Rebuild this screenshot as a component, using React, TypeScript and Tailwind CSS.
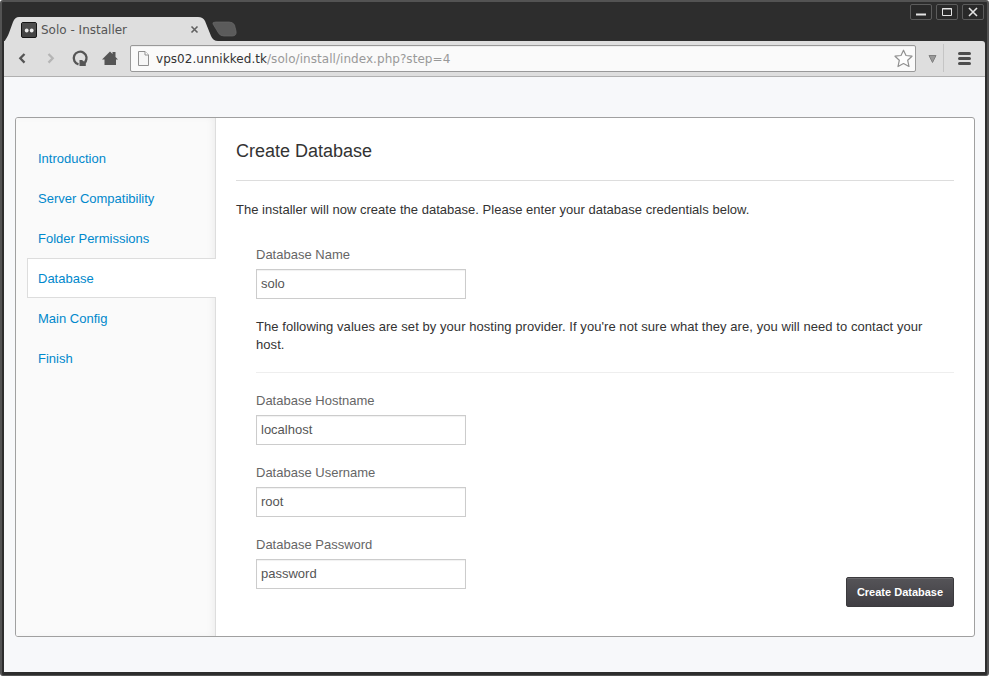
import React from "react";

const steps = ["Introduction", "Server Compatibility", "Folder Permissions", "Database", "Main Config", "Finish"];

function Field({ label, value }: { label: string; value: string }) {
  return (
    <label className="block">
      <span className="block h-[18px] leading-[18px] text-[#666]">{label}</span>
      <input
        defaultValue={value}
        className="mt-[5px] block h-[30px] w-[210px] border border-[#ccc] bg-white px-1 pb-[2px] text-[13px] text-[#555] shadow-[inset_0_1px_1px_rgba(0,0,0,0.06)] outline-none"
      />
    </label>
  );
}

function WindowButton({ children }: { children: React.ReactNode }) {
  return (
    <div className="flex h-4 w-[22px] items-center justify-center rounded-[2px] border border-[#5c5c5c] bg-[#292929]">
      <svg width="12" height="12" viewBox="0 0 12 12" fill="none" stroke="#e4e4e4">
        {children}
      </svg>
    </div>
  );
}

function TabStrip() {
  return (
    <div className="flex h-[39px] justify-between">
      <div className="relative h-[39px] w-[240px]">
        <svg className="absolute left-0 top-[15px]" width="236" height="25" viewBox="0 0 236 25">
          <path d="M0 25C2 22 4 19 5 16L9 5Q11 0 15 0H194Q199 0 201 4L207 19Q209 24 214 24V25Z" fill="#dedede" />
          <path d="M212 5H225Q229 5 230.500 8L232 14Q233 19 228 19H220Q216 19 214.500 16L209 7Q208 5 212 5Z" fill="#5b5b5b" stroke="#686868" strokeWidth="0.700" />
        </svg>
        <div className="relative flex h-full items-center pl-[17px] pt-[16px]">
          <svg width="16" height="16" viewBox="0 0 16 16">
            <rect x="0.500" y="0.500" width="15" height="15" rx="1.500" fill="#444" stroke="#161616" />
            <rect x="1" y="1" width="14" height="7" fill="#4d4d4d" />
            <circle cx="5.700" cy="8.500" r="1.900" fill="#ededed" />
            <circle cx="10.700" cy="8.500" r="1.900" fill="#ededed" />
          </svg>
          <span className="ml-1 w-[149px] whitespace-nowrap font-['DejaVu_Sans',sans-serif] text-[12px] leading-4 text-[#555]">Solo - Installer</span>
          <svg width="9" height="9" viewBox="0 0 9 9" stroke="#616161" strokeWidth="1.600">
            <path d="M1.500 1.500L7.500 7.500M7.500 1.500L1.500 7.500" />
          </svg>
        </div>
      </div>
      <div className="flex gap-1 pr-px pt-[2px]">
        <WindowButton><path d="M1 8.500H11" strokeWidth="2" /></WindowButton>
        <WindowButton><path d="M1.500 2.500H10.500V9.500H1.500Z M1 3H11" /></WindowButton>
        <WindowButton><path d="M2 2L10 10M10 2L2 10" strokeWidth="1.600" /></WindowButton>
      </div>
    </div>
  );
}

function Toolbar() {
  return (
    <div className="flex h-9 shrink-0 rounded-tr-[3px] border-b border-[#b0b0b0] bg-[#dedede]">
      <svg className="shrink-0" width="126" height="35" viewBox="4 41 126 35">
        <path d="M24.500 54L20.300 58.300L24.500 62.600" fill="none" stroke="#555" strokeWidth="2.300" />
        <path d="M48.500 54L52.700 58.300L48.500 62.600" fill="none" stroke="#b5b5b5" strokeWidth="2.300" />
        <path d="M78.500 64.300A6.400 6.400 0 1 1 85 62.300" fill="none" stroke="#555" strokeWidth="2.300" />
        <path d="M79.500 60H82L84 61.500L87 61L85.800 63.500V66H79.500Z" fill="#555" />
        <path d="M102 59.500L110 51.500L112.500 54V52H115.500V57L118 59.500H116V65H104.500V59.500Z" fill="#555" />
      </svg>
      <div className="mt-[4px] flex h-[27px] w-[786px] shrink-0 items-center rounded-[2px] border border-[#999] bg-[#fafafa] pl-[7px] pr-[2px] shadow-[inset_0_1px_0_#eee]">
        <svg width="11" height="15" viewBox="0 0 11 15" fill="#f6f6f6" stroke="#909090">
          <path d="M0.500 0.500H7L10.500 4V14.500H0.500Z" />
          <path d="M7 0.500V4H10.500" fill="#fff" />
        </svg>
        <span className="ml-[7px] grow whitespace-nowrap font-['DejaVu_Sans',sans-serif] text-[12px] leading-5 tracking-[0.05px] text-[#999]">
          <span className="text-[#333]">vps02.unnikked.tk</span>/solo/install/index.php?step=4
        </span>
        <svg width="19" height="19" viewBox="0 0 19 19" fill="#fdfdfd" stroke="#909090" strokeWidth="1.200" strokeLinejoin="round">
          <path d="M9.500 1.200L12 6.500L18 7.200L13.700 11.300L15 17.500L9.500 14.500L4 17.500L5.300 11.300L1 7.200L7 6.500Z" />
        </svg>
      </div>
      <svg className="shrink-0" width="69" height="35" viewBox="916 41 69 35">
        <path d="M929 55.500H936L932.500 62.500Z" fill="#999" stroke="#808080" />
        <path d="M943.500 44V72" stroke="#c5c5c5" />
        <path d="M959.500 53.500H969.500M959.500 58.500H969.500M959.500 63.500H969.500" stroke="#4d4d4d" strokeWidth="3" strokeLinecap="round" />
      </svg>
    </div>
  );
}

function Sidebar() {
  return (
    <nav className="w-[200px] shrink-0 border-r border-[#ddd] bg-[#fafafa] pl-[11px] pt-5 shadow-[inset_-4px_0_10px_-4px_rgba(0,0,0,0.08)]">
      {steps.map((step) => (
        <a
          key={step}
          href="#"
          className={
            step === "Database"
              ? "-mr-px block h-10 border-y border-l border-[#ddd] bg-white pl-[10px] leading-[39px] text-[#0088cc]"
              : "block h-10 pl-[11px] leading-[42px] text-[#0088cc]"
          }
        >
          {step}
        </a>
      ))}
    </nav>
  );
}

export default function App() {
  return (
    <div className="h-[676px] w-[989px] bg-white">
      <div className="flex h-full flex-col rounded-[3px] border-2 border-b-[1px] border-[#535353] bg-[#2d2d2d] px-[2px] pb-[3px] font-['Liberation_Sans',Arial,sans-serif] text-[13px] text-[#333]">
        <TabStrip />
        <Toolbar />
        <main className="grow bg-[#f7f8fa] px-[11px] pr-[10px] pt-10">
          <section className="flex h-[520px] w-[960px] overflow-hidden rounded-[3px] border border-[#a0a0a0] bg-white">
            <Sidebar />
            <div className="flex grow flex-col px-5">
              <h1 className="mt-[21px] h-[42px] shrink-0 border-b border-[#ddd] text-[18px] leading-[25px]">Create Database</h1>
              <p className="mt-5 leading-[18px] tracking-[0.02px]">The installer will now create the database. Please enter your database credentials below.</p>
              <div className="ml-5 mt-[27px]">
                <Field label="Database Name" value="solo" />
                <p className="mt-[19px] h-[55px] border-b border-[#eee] pr-5 leading-[18px] tracking-[0.06px]">
                  The following values are set by your hosting provider. If you're not sure what they are, you will need to contact your host.
                </p>
                <div className="mt-[19px] space-y-[19px]">
                  <Field label="Database Hostname" value="localhost" />
                  <Field label="Database Username" value="root" />
                  <Field label="Database Password" value="password" />
                </div>
              </div>
              <button className="-mt-3 h-[30px] w-[108px] shrink-0 self-end rounded-[2px] border border-[#3b3a3d] bg-linear-to-b from-[#555458] to-[#403e43] text-[11px] font-bold text-white shadow-[inset_0_1px_0_#69686c]">
                Create Database
              </button>
            </div>
          </section>
        </main>
      </div>
    </div>
  );
}
